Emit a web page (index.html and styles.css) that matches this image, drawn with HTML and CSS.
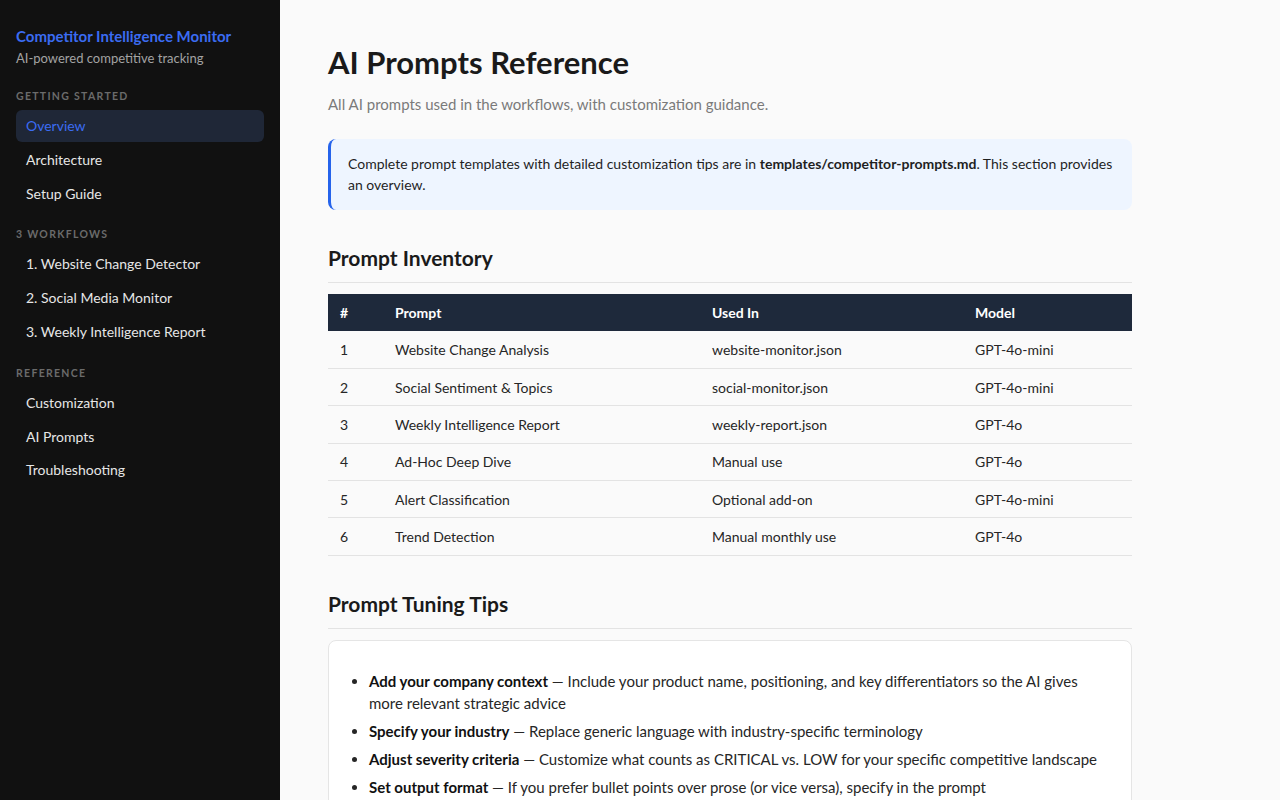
FILE: index.html
```html
<!DOCTYPE html>
<html lang="en">
<head>
<meta charset="utf-8">
<title>AI Prompts Reference</title>
<link rel="stylesheet" href="styles.css">
</head>
<body>
<div class="layout">
  <aside class="sidebar">
    <div class="brand">
      <div class="brand-title">Competitor Intelligence Monitor</div>
      <div class="brand-sub">AI-powered competitive tracking</div>
    </div>
    <nav class="nav">
      <div class="nav-label">Getting Started</div>
      <a class="nav-item active">Overview</a>
      <a class="nav-item">Architecture</a>
      <a class="nav-item">Setup Guide</a>
      <div class="nav-label">3 Workflows</div>
      <a class="nav-item">1. Website Change Detector</a>
      <a class="nav-item">2. Social Media Monitor</a>
      <a class="nav-item">3. Weekly Intelligence Report</a>
      <div class="nav-label">Reference</div>
      <a class="nav-item">Customization</a>
      <a class="nav-item">AI Prompts</a>
      <a class="nav-item">Troubleshooting</a>
    </nav>
  </aside>
  <main class="main">
    <div class="content">
      <h1 class="title">AI Prompts Reference</h1>
      <p class="lead">All AI prompts used in the workflows, with customization guidance.</p>
      <div class="callout">Complete prompt templates with detailed customization tips are in <strong>templates/competitor-prompts.md</strong>. This section provides an overview.</div>

      <h2 class="section-title">Prompt Inventory</h2>
      <table class="table">
        <thead>
          <tr><th class="c-num">#</th><th class="c-prompt">Prompt</th><th class="c-used">Used In</th><th>Model</th></tr>
        </thead>
        <tbody>
          <tr><td>1</td><td>Website Change Analysis</td><td>website-monitor.json</td><td>GPT-4o-mini</td></tr>
          <tr><td>2</td><td>Social Sentiment &amp; Topics</td><td>social-monitor.json</td><td>GPT-4o-mini</td></tr>
          <tr><td>3</td><td>Weekly Intelligence Report</td><td>weekly-report.json</td><td>GPT-4o</td></tr>
          <tr><td>4</td><td>Ad-Hoc Deep Dive</td><td>Manual use</td><td>GPT-4o</td></tr>
          <tr><td>5</td><td>Alert Classification</td><td>Optional add-on</td><td>GPT-4o-mini</td></tr>
          <tr><td>6</td><td>Trend Detection</td><td>Manual monthly use</td><td>GPT-4o</td></tr>
        </tbody>
      </table>

      <h2 class="section-title">Prompt Tuning Tips</h2>
      <div class="card">
        <ul class="tips">
          <li><strong>Add your company context</strong> — Include your product name, positioning, and key differentiators so the AI gives more relevant strategic advice</li>
          <li><strong>Specify your industry</strong> — Replace generic language with industry-specific terminology</li>
          <li><strong>Adjust severity criteria</strong> — Customize what counts as CRITICAL vs. LOW for your specific competitive landscape</li>
          <li><strong>Set output format</strong> — If you prefer bullet points over prose (or vice versa), specify in the prompt</li>
        </ul>
      </div>
    </div>
  </main>
</div>
</body>
</html>
```

FILE: styles.css
```css
* { box-sizing: border-box; }
html, body { margin: 0; padding: 0; height: 100%; }
body {
  font-family: Lato, "Noto Sans", sans-serif;
  color: #1a1a1a;
  background: #fafafa;
  overflow: hidden;
}
.layout { display: flex; height: 800px; }
.sidebar {
  width: 280px;
  flex: 0 0 280px;
  background: #111111;
  padding: 26px 16px;
}
.brand-title { color: #3b6cf2; font-weight: 700; font-size: 15px; line-height: 20px; }
.brand-sub { color: #a3a3a3; font-size: 13px; line-height: 18px; margin-top: 3px; }
.nav { display: flex; flex-direction: column; margin-top: 22px; }
.nav-label {
  color: #6b6b6b;
  font-size: 10.5px;
  font-weight: 700;
  letter-spacing: 1.3px;
  text-transform: uppercase;
  line-height: 14px;
  margin-bottom: 7px;
}
.nav-item + .nav-label { margin-top: 16px; }
.nav-item {
  display: block;
  color: #e6e6e6;
  font-size: 14px;
  line-height: 32px;
  height: 32px;
  padding: 0 10px;
  border-radius: 6px;
  margin-bottom: 1.8px;
}
.nav-item.active { background: #1f2737; color: #3b6cf2; }

.main { flex: 1; overflow: hidden; padding: 40px 48px; }
.content { width: 804px; }
.title { font-size: 31px; font-weight: 700; margin: 2px 0 0; line-height: 40px; color: #1a1a1a; }
.lead { color: #7a7a7a; font-size: 15px; margin: 11px 0 0; line-height: 22px; }
.callout {
  margin-top: 24px;
  background: #eef5ff;
  border-left: 3px solid #2563eb;
  border-radius: 8px;
  padding: 14px 18px 15px 17px;
  font-size: 14px;
  line-height: 21px;
  color: #1f1f1f;
}
.section-title {
  font-size: 21px;
  font-weight: 700;
  margin: 34px 0 11px;
  padding-bottom: 10px;
  border-bottom: 1px solid #e3e3e3;
  line-height: 28px;
}
.table { width: 100%; border-collapse: collapse; font-size: 14px; }
.table th {
  background: #1e293b;
  color: #ffffff;
  text-align: left;
  font-weight: 700;
  height: 37px;
  padding: 0 12px;
}
.table td {
  height: 37.4px;
  padding: 0 12px;
  border-bottom: 1px solid #e3e3e3;
  color: #262626;
}
.c-num { width: 55px; }
.c-prompt { width: 317px; }
.c-used { width: 263px; }
.card {
  background: #ffffff;
  border: 1px solid #e5e5e5;
  border-radius: 8px;
  padding: 18px 20px;
}
.tips { margin: 11px 0 16px; padding-left: 20px; font-size: 15px; line-height: 22px; color: #262626; }
.tips li { margin-bottom: 6px; }
.tips strong { color: #111; }
```
